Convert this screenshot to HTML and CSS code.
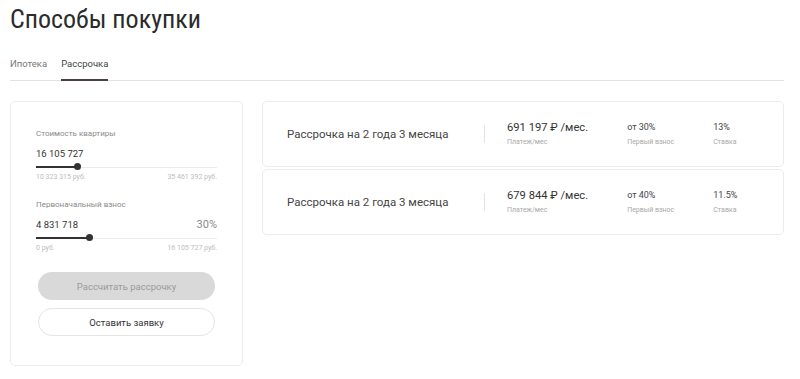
FILE: index.html
```html
<!DOCTYPE html>
<html>
<head>
    <meta charset="UTF-8">
    <meta name="viewport" content="width=device-width, initial-scale=1.0">
    <title>Способы покупки</title>
    <link rel="stylesheet" href="styles.css">
</head>
<body>
    <div class="container">
        <h1 class="title">Способы покупки</h1>

        <!-- вкладки -->
        <div class="tabs">
            <span class="tab">Ипотека</span>
            <span class="tab active">Рассрочка</span>
        </div>

        <div class="content">
            <!-- калькулятор -->
            <div class="calc">
                <div class="field">
                    <div class="label">Стоимость квартиры</div>
                    <div class="value-row">
                        <span class="value">16 105 727</span>
                    </div>
                    <div class="slider">
                        <div class="slider-fill" style="width: 42px"></div>
                    </div>
                    <div class="range">
                        <span>10 323 315 руб.</span>
                        <span>35 461 392 руб.</span>
                    </div>
                </div>

                <div class="field">
                    <div class="label">Первоначальный взнос</div>
                    <div class="value-row">
                        <span class="value">4 831 718</span>
                        <span class="percent">30%</span>
                    </div>
                    <div class="slider">
                        <div class="slider-fill" style="width: 54px"></div>
                    </div>
                    <div class="range">
                        <span>0 руб.</span>
                        <span>16 105 727 руб.</span>
                    </div>
                </div>

                <button class="btn btn-disabled">Рассчитать рассрочку</button>
                <button class="btn btn-outline">Оставить заявку</button>
            </div>

            <!-- варианты -->
            <div class="offers">
                <div class="offer">
                    <div class="offer-name">Рассрочка на 2 года 3 месяца</div>
                    <div class="offer-divider"></div>
                    <div class="offer-stats">
                        <div class="stat">
                            <div class="stat-price">691 197 ₽ /мес.</div>
                            <div class="stat-label">Платеж/мес</div>
                        </div>
                        <div class="stat">
                            <div class="stat-value">от 30%</div>
                            <div class="stat-label">Первый взнос</div>
                        </div>
                        <div class="stat">
                            <div class="stat-value">13%</div>
                            <div class="stat-label">Ставка</div>
                        </div>
                    </div>
                </div>
                <div class="offer">
                    <div class="offer-name">Рассрочка на 2 года 3 месяца</div>
                    <div class="offer-divider"></div>
                    <div class="offer-stats">
                        <div class="stat">
                            <div class="stat-price">679 844 ₽ /мес.</div>
                            <div class="stat-label">Платеж/мес</div>
                        </div>
                        <div class="stat">
                            <div class="stat-value">от 40%</div>
                            <div class="stat-label">Первый взнос</div>
                        </div>
                        <div class="stat">
                            <div class="stat-value">11.5%</div>
                            <div class="stat-label">Ставка</div>
                        </div>
                    </div>
                </div>
            </div>
        </div>
    </div>
</body>
</html>
```

FILE: styles.css
```css
body {
    margin: 0;
    background: #fff;
    font-family: Roboto, "Noto Sans", Arial, sans-serif;
    color: #333;
}
.container {
    width: 774px;
    margin-left: 10px;
}
.title {
    margin: 0;
    padding-top: 4px;
    font-family: "Roboto Condensed", "Liberation Sans Narrow", "DejaVu Sans Condensed", Roboto, sans-serif;
    font-size: 26px;
    font-weight: 400;
    line-height: 30px;
    color: #2b2b2b;
}
.tabs {
    display: flex;
    gap: 14px;
    margin-top: 24px;
    border-bottom: 1px solid #e2e2e2;
}
.tab {
    padding-bottom: 9px;
    font-size: 9.5px;
    line-height: 12px;
    color: #777;
}
.tab.active {
    color: #444;
    margin-bottom: -1px;
    border-bottom: 2px solid #4a4040;
}
.content {
    display: flex;
    gap: 19px;
    margin-top: 20px;
}
.calc {
    width: 233px;
    box-sizing: border-box;
    padding: 26px 25px 21px;
    border: 1px solid #ececec;
    border-radius: 5px;
}
.field {
    margin-bottom: 17px;
}
.label {
    font-size: 8px;
    line-height: 12px;
    color: #8a8a8a;
}
.value-row {
    display: flex;
    justify-content: space-between;
    align-items: flex-end;
    margin-top: 7px;
}
.value {
    font-size: 9.5px;
    line-height: 14px;
    color: #333;
}
.percent {
    font-size: 11px;
    line-height: 14px;
    color: #8a8a8a;
}
.slider {
    position: relative;
    height: 1px;
    margin-top: 6px;
    background: #ececec;
}
.slider-fill {
    position: absolute;
    left: 0;
    top: -1px;
    height: 2px;
    background: #333;
}
.slider-fill::after {
    content: "";
    position: absolute;
    right: -3px;
    top: -3px;
    width: 7px;
    height: 7px;
    border-radius: 50%;
    background: #333;
}
.range {
    display: flex;
    justify-content: space-between;
    margin-top: 4px;
    font-size: 7px;
    line-height: 10px;
    color: #bcbcbc;
}
.btn {
    display: block;
    width: 177px;
    height: 28px;
    margin: 0 0 8px 2px;
    border-radius: 14px;
    font-family: Roboto, "Noto Sans", Arial, sans-serif;
    font-size: 9.5px;
    cursor: pointer;
}
.btn-disabled {
    margin-top: 19px;
    border: none;
    background: #d9d9d9;
    color: #9a9a9a;
}
.btn-outline {
    border: 1px solid #e4e4e4;
    background: #fff;
    color: #333;
}
.offers {
    flex: 1;
    display: flex;
    flex-direction: column;
    gap: 2px;
}
.offer {
    display: flex;
    align-items: center;
    height: 66px;
    box-sizing: border-box;
    padding-left: 24px;
    border: 1px solid #ececec;
    border-radius: 5px;
}
.offer-name {
    width: 197px;
    font-size: 11.5px;
    color: #444;
}
.offer-divider {
    width: 1px;
    height: 18px;
    background: #e4e4e4;
}
.offer-stats {
    display: flex;
    gap: 39px;
    padding-left: 22px;
    margin-top: -1px;
}
.stat-price {
    font-size: 11.2px;
    line-height: 16px;
    color: #333;
}
.stat-value {
    font-size: 9px;
    line-height: 14px;
    color: #444;
}
.stat-label {
    margin-top: 1px;
    font-size: 7px;
    line-height: 10px;
    color: #a8a8a8;
}
.stat:not(:first-child) .stat-label {
    margin-top: 3px;
}
```
